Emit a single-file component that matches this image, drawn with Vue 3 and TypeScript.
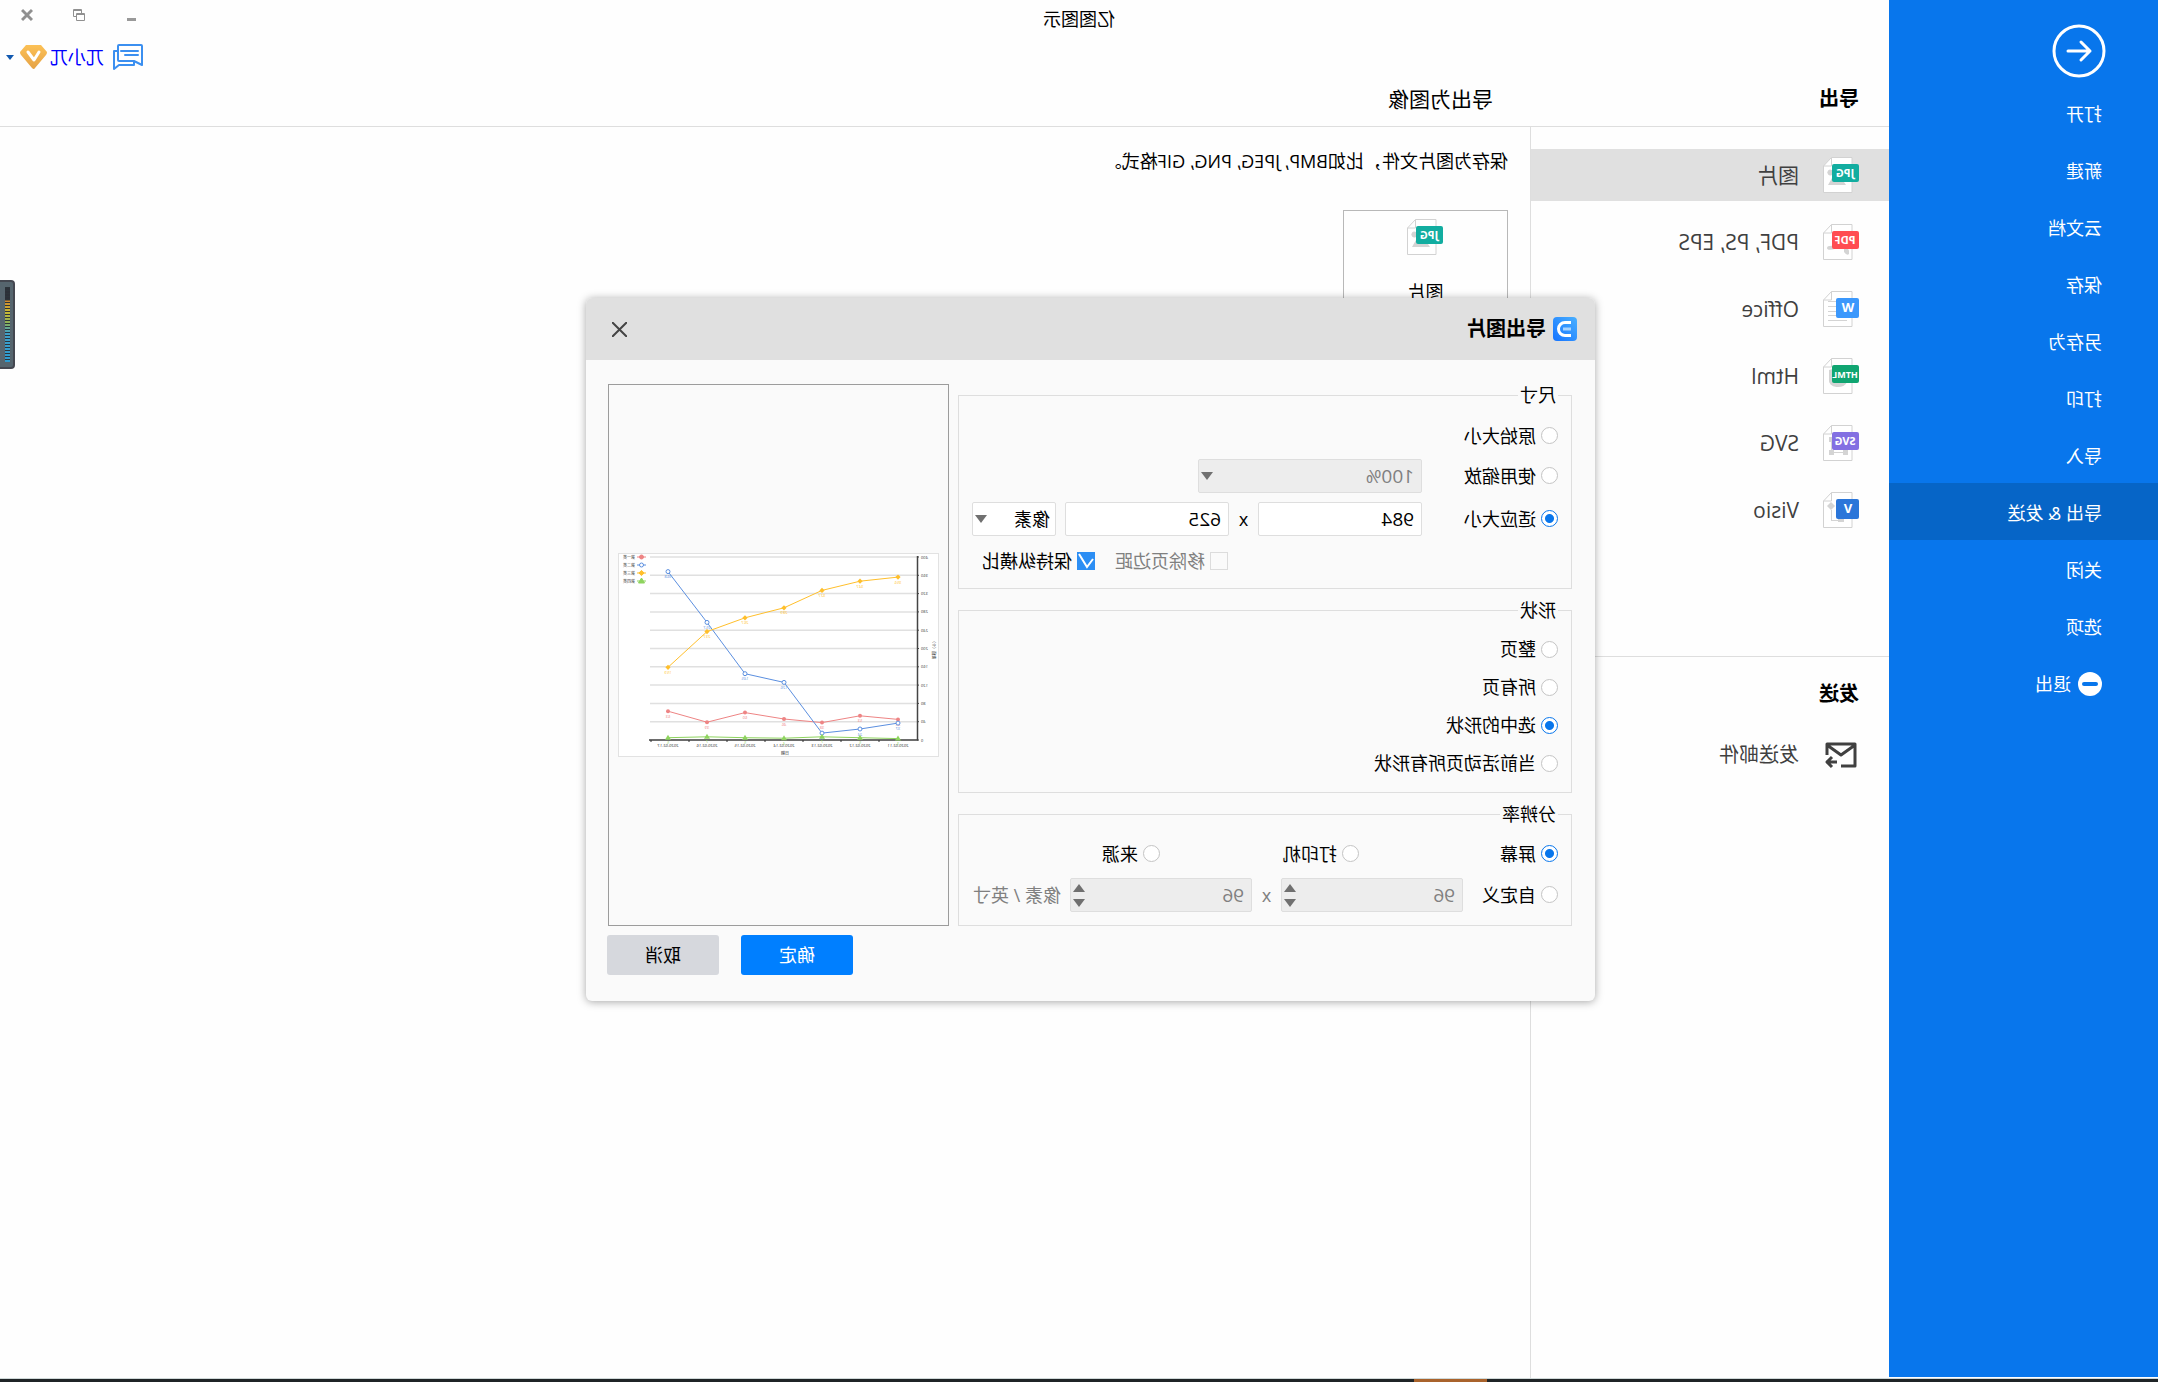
<script setup lang="ts">
import { ref } from 'vue'

interface FileKind {
  label: string
  tag: string
  color: string
  square?: boolean
  art: string
}

const menu = ['打开', '新建', '云文档', '保存', '另存为', '打印', '导入', '导出 & 发送', '关闭', '选项']
const activeMenu = ref(7)

const kinds: FileKind[] = [
  { label: '图片', tag: 'JPG', color: '#12ada0', art: 'M13 28l6-9 5 5 3-3 4 7zM27 13a3 3 0 1 1 0 5z' },
  { label: 'PDF, PS, EPS', tag: 'PDF', color: '#ff4d52', art: 'M10 27q0-3 5-3v4q-3 4-5 2zM24 22q8-1 8 2t-8 1z' },
  { label: 'Office', tag: 'W', color: '#3b98fc', square: true, art: 'M23 10h8v1h-8zM23 15h8v1h-8zM23 20h8v1h-8zM23 24h8v1h-8zM12 29h19v1H12z' },
  { label: 'Html', tag: 'HTML', color: '#10a571', art: 'M12 24a9 6 0 0 0 18-2V12l-4-1v12z' },
  { label: 'SVG', tag: 'SVG', color: '#8370e2', art: 'M11 25h5v5h-5zM25 25h5v5h-5zM16 27h9v1h-9zM25 12h5v5h-5zM27 17h1v8h-1z' },
  { label: 'Visio', tag: 'V', color: '#2b76d9', square: true, art: 'M28 10l4 4-4 4-4-4zM27 18h1v11h-8v-1h7zM15 25h6v5h-6z' },
]
const activeKind = ref(0)

const sizeMode = ref('fit')
const zoom = ref('100%')
const width = ref('984')
const height = ref('625')
const unit = ref('像素')
const trimMargin = ref(false)
const keepRatio = ref(true)

const shapeOptions = ['整页', '所有页', '选中的形状', '当前活动页所有形状']
const shape = ref('选中的形状')

const resolution = ref('屏幕')
const dpiX = ref(96)
const dpiY = ref(96)

/* Preview chart geometry */
const originY = 187
const unitPx = 183 / 400
const pointX = [41, 79, 117, 155, 194, 232, 271]
const toY = (v: number) => Math.round((originY - v * unitPx) * 10) / 10
const ticks = [0, 40, 80, 120, 160, 200, 240, 280, 320, 360, 400]
const dates = ['2020-02-11', '2020-02-12', '2020-02-13', '2020-02-14', '2020-02-15', '2020-02-16', '2020-02-17']
const series = [
  { name: '第一类', color: '#ee8484', marker: 'dot', values: [45, 53, 38, 46, 60, 39, 63] },
  { name: '第二类', color: '#5b8fe0', marker: 'ring', values: [37, 24, 15, 126, 145, 257, 368] },
  { name: '第三类', color: '#ffbf2b', marker: 'diamond', values: [356, 347, 327, 289, 267, 237, 159] },
  { name: '第四类', color: '#8ed45e', marker: 'triangle', values: [3, 5, 7, 4, 5, 7, 5] },
]
const linePoints = (values: number[]) => values.map((v, i) => `${pointX[i]},${toY(v)}`).join(' ')
const markerPath = (kind: string, x: number, y: number) => {
  if (kind === 'diamond') return `M${x} ${y - 2.6}L${x + 2.6} ${y}L${x} ${y + 2.6}L${x - 2.6} ${y}Z`
  if (kind === 'triangle') return `M${x} ${y - 3}L${x + 3} ${y + 2}L${x - 3} ${y + 2}Z`
  return `M${x - 2} ${y}a2 2 0 1 0 4 0a2 2 0 1 0 -4 0Z`
}
</script>

<template>
  <div class="app">
    <div class="workspace">
      <nav class="sidebar">
        <button class="back" aria-label="返回">
          <svg width="54" height="54" viewBox="0 0 54 54" fill="none" stroke="#fff" stroke-width="3" stroke-linecap="round" stroke-linejoin="round">
            <circle cx="27" cy="27" r="25" />
            <path d="M38 27H16M25 18l-9 9 9 9" />
          </svg>
        </button>
        <button v-for="(item, i) in menu" :key="item" class="menu-item" :class="{ active: i === activeMenu }" @click="activeMenu = i">{{ item }}</button>
        <button class="menu-item exit">
          <svg width="24" height="24" viewBox="0 0 24 24"><circle cx="12" cy="12" r="12" fill="#fff" /><rect x="4" y="10" width="16" height="4" rx="2" fill="#0876ec" /></svg>
          退出
        </button>
      </nav>

      <main class="main">
        <header class="header">
          <div class="titlebar">
            <span class="app-title">亿图图示</span>
            <div class="window-buttons">
              <button aria-label="最小化"><svg width="12" height="14" viewBox="0 0 12 14"><path d="M1 10h9v3H1z" fill="#999" /></svg></button>
              <button aria-label="还原"><svg width="12" height="14" viewBox="0 0 12 14" fill="none" stroke="#909090"><path d="M3.5 5V1.5h8v7H9" /><path d="M3 2.5h9" /><path d="M.5 5.5h8v7h-8zM.5 6.500h8" /></svg></button>
              <button aria-label="关闭"><svg width="12" height="14" viewBox="0 0 12 14" fill="none" stroke="#909090" stroke-width="3"><path d="M1 2l10 10M11 2L1 12" /></svg></button>
            </div>
          </div>
          <div class="account">
            <svg width="30" height="26" viewBox="0 0 30 26" fill="none" stroke="#3b8ff0" stroke-width="2" stroke-linejoin="round" stroke-linecap="round">
              <path d="M1 2a1 1 0 0 1 1-1h22a1 1 0 0 1 1 1v14a1 1 0 0 1-1 1H9l-2 1-6 3zM5 7h17M5 11h13" />
              <path d="M26 7h3v18l-5-4H9v-3" />
            </svg>
            <a href="#" class="user">兀小兀</a>
            <svg width="27" height="24" viewBox="0 0 27 24"><defs><linearGradient id="gem" x1="0" y1="0" x2="0" y2="1"><stop offset="0" stop-color="#fcc156" /><stop offset="1" stop-color="#e5a246" /></linearGradient></defs><path d="M6 0h15l6 7q0 2-1 3L15 23q-2 2-3 0L1 10Q0 9 0 7z" fill="url(#gem)" /><path d="M8 7l5 8 6-8" fill="none" stroke="#fff" stroke-width="3" stroke-linecap="round" stroke-linejoin="round" /></svg>
            <svg width="8" height="5" viewBox="0 0 8 5"><path d="M0 0h8L4 5z" fill="#1259b0" /></svg>
          </div>
          <div class="headings">
            <h2 class="panel-title">导出</h2>
            <h1 class="content-title">导出为图像</h1>
          </div>
        </header>

        <div class="columns">
          <aside class="panel">
            <div class="kinds">
              <button v-for="(k, i) in kinds" :key="k.label" class="kind" :class="{ active: i === activeKind }" @click="activeKind = i">
                <svg width="36" height="36" viewBox="0 0 36 36">
                  <path d="M7 .5h20.500L35.500 9v26.500H7z" fill="#fff" stroke="#d2d2d2" />
                  <path d="M27.500 .5V9h8" fill="none" stroke="#d2d2d2" />
                  <path :d="k.art" fill="#d4d4d4" />
                  <rect y="7" :width="k.square ? 23 : 27" :height="k.square ? 20 : 18" rx="2" :fill="k.color" />
                  <text :x="k.square ? 11 : 14" :y="k.square ? 21 : 20" text-anchor="middle" class="tag" :class="{ big: k.square, small: k.tag === 'HTML' }">{{ k.tag }}</text>
                </svg>
                <span>{{ k.label }}</span>
              </button>
            </div>
            <div class="send">
              <h2>发送</h2>
              <button class="kind">
                <svg width="36" height="36" viewBox="0 0 36 36" fill="none" stroke="#404040" stroke-width="3" stroke-linejoin="round">
                  <path d="M18 29H4V7h28v11M4 8l14 10L32 8" />
                  <path d="M33 25H22M27 20l5 5-5 5" />
                </svg>
                <span>发送邮件</span>
              </button>
            </div>
          </aside>
          <section class="content">
            <p>保存为图片文件，比如BMP, JPEG, PNG, GIF格式。</p>
            <button class="card">
              <svg width="36" height="36" viewBox="0 0 36 36">
                <path d="M7 .5h20.500L35.500 9v26.500H7z" fill="#fff" stroke="#d2d2d2" />
                <path d="M27.500 .5V9h8" fill="none" stroke="#d2d2d2" />
                <path :d="kinds[0].art" fill="#d4d4d4" />
                <rect y="7" width="27" height="18" rx="2" fill="#12ada0" />
                <text x="14" y="20" text-anchor="middle" class="tag">JPG</text>
              </svg>
              <span>图片</span>
            </button>
          </section>
        </div>
      </main>
    </div>
    <footer class="taskbar"><i></i></footer>

    <div class="meter"><i></i></div>

    <div class="dialog" role="dialog" aria-labelledby="dialog-title">
      <div class="dialog-head">
        <svg width="24" height="24" viewBox="0 0 24 24" fill="none" stroke="#fff" stroke-width="3"><defs><linearGradient id="logo" x1="0" y1="0" x2="1" y2="1"><stop offset="0" stop-color="#4ab0ff" /><stop offset="1" stop-color="#1473ff" /></linearGradient></defs><rect width="24" height="24" rx="4" fill="url(#logo)" stroke="none" /><path d="M6 5.500h6a6.500 6.500 0 0 1 0 13H6" /><path d="M6 12h8" stroke="#a8d4ff" /></svg>
        <strong id="dialog-title">导出图片</strong>
        <button class="dialog-close" aria-label="关闭"><svg width="15" height="15" viewBox="0 0 15 15" stroke="#444" stroke-width="2"><path d="M0 0l15 15M15 0L0 15" /></svg></button>
      </div>
      <div class="dialog-body">
        <div class="options">
          <fieldset class="size-set">
            <legend>尺寸</legend>
            <div class="row">
              <label class="choice"><input v-model="sizeMode" type="radio" name="size" value="original" />原始大小</label>
            </div>
            <div class="row">
              <label class="choice lead"><input v-model="sizeMode" type="radio" name="size" value="zoom" />使用缩放</label>
              <span class="select zoom"><select v-model="zoom" disabled aria-label="缩放"><option>100%</option></select></span>
            </div>
            <div class="row">
              <label class="choice lead"><input v-model="sizeMode" type="radio" name="size" value="fit" />适应大小</label>
              <input v-model="width" class="box" type="text" aria-label="宽度" />
              <span class="times">x</span>
              <input v-model="height" class="box" type="text" aria-label="高度" />
              <span class="select unit"><select v-model="unit" aria-label="单位"><option>像素</option></select></span>
            </div>
            <div class="row checks">
              <label class="choice off"><input v-model="trimMargin" type="checkbox" disabled />移除页边距</label>
              <label class="choice"><input v-model="keepRatio" type="checkbox" />保持纵横比</label>
            </div>
          </fieldset>
          <fieldset class="shape-set">
            <legend>形状</legend>
            <div v-for="s in shapeOptions" :key="s" class="row">
              <label class="choice"><input v-model="shape" type="radio" name="shape" :value="s" />{{ s }}</label>
            </div>
          </fieldset>
          <fieldset class="res-set">
            <legend>分辨率</legend>
            <div class="row thirds">
              <label v-for="r in ['屏幕', '打印机', '来源']" :key="r" class="choice"><input v-model="resolution" type="radio" name="resolution" :value="r" />{{ r }}</label>
            </div>
            <div class="row off">
              <label class="choice custom"><input v-model="resolution" type="radio" name="resolution" value="自定义" />自定义</label>
              <span class="spin"><input v-model="dpiX" class="box" type="number" disabled aria-label="水平分辨率" /></span>
              <span class="times">x</span>
              <span class="spin"><input v-model="dpiY" class="box" type="number" disabled aria-label="垂直分辨率" /></span>
              <span class="per">像素 / 英寸</span>
            </div>
          </fieldset>
        </div>
        <div class="preview">
          <svg class="chart" viewBox="0 0 321 204">
            <rect x=".5" y=".5" width="320" height="203" fill="#fff" stroke="#e2e2e2" />
            <g v-for="t in ticks" :key="t">
              <line x1="21" :x2="289" :y1="toY(t)" :y2="toY(t)" stroke="#e0e0e0" stroke-width="1.500" />
              <line x1="20" x2="22" :y1="toY(t)" :y2="toY(t)" stroke="#444" />
              <text x="18" :y="toY(t) + 1.500" text-anchor="end" fill="#333">{{ t }}</text>
            </g>
            <path d="M21.500 3V187H290" fill="none" stroke="#444" stroke-width="1.500" />
            <g v-for="(d, i) in dates" :key="d">
              <line :x1="60 + i * 38" :x2="60 + i * 38" y1="187" y2="189" stroke="#333" />
              <text :x="pointX[i]" y="194" text-anchor="middle" fill="#222">{{ d }}</text>
            </g>
            <text x="154" y="202" text-anchor="middle" fill="#222">日期</text>
            <text transform="translate(7 96) rotate(-90)" text-anchor="middle" fill="#222">数值（个）</text>
            <g v-for="(s, n) in series" :key="s.name">
              <polyline :points="linePoints(s.values)" fill="none" :stroke="s.color" stroke-width="1" />
              <g v-for="(v, i) in s.values" :key="i">
                <path :d="markerPath(s.marker, pointX[i], toY(v))" :fill="s.marker === 'ring' ? '#fff' : s.color" :stroke="s.marker === 'ring' ? s.color : 'none'" />
                <text :x="pointX[i]" :y="toY(v) + 6.500" text-anchor="middle" :fill="s.color">{{ v }}</text>
              </g>
              <line x1="293" x2="302" :y1="4 + n * 8" :y2="4 + n * 8" :stroke="s.color" />
              <path :d="markerPath(s.marker, 297.5, 4 + n * 8)" :fill="s.marker === 'ring' ? '#fff' : s.color" :stroke="s.color" />
              <text x="304" :y="5.500 + n * 8" fill="#444">{{ s.name }}</text>
            </g>
          </svg>
        </div>
      </div>
      <div class="dialog-foot">
        <button class="ok">确定</button>
        <button class="cancel">取消</button>
      </div>
    </div>
  </div>
</template>

<style>
body {
  background: #fefefe;
  overflow-x: hidden;
}
</style>

<style scoped>
.app {
  position: relative;
  display: flex;
  flex-direction: column;
  min-height: 100vh;
  background: #fefefe;
  color: #000;
  font-family: "Open Sans", "Noto Sans CJK SC", sans-serif;
  font-size: 18px;
  line-height: 24px;
  /* the whole window is shown flipped, left to right */
  transform: scaleX(-1);
}
button,
input,
select {
  font: inherit;
  color: inherit;
  margin: 0;
  box-sizing: border-box;
}
button {
  border: 0;
  padding: 0;
  background: none;
  cursor: pointer;
}
h1,
h2,
p {
  margin: 0;
}
svg {
  display: block;
  flex: none;
}
.workspace {
  flex: 1;
  display: flex;
}
.sidebar {
  flex: none;
  width: 269px;
  display: flex;
  flex-direction: column;
  background: #0876ec;
  color: #fff;
  margin-bottom: 1px;
}
.back {
  margin: 24px 0 6px 52px;
  align-self: flex-start;
}
.menu-item {
  display: flex;
  align-items: center;
  gap: 7px;
  height: 57px;
  padding: 2px 0 0 56px;
}
.menu-item.active {
  background: #0665c7;
}
.main {
  flex: 1;
  min-width: 0;
  display: flex;
  flex-direction: column;
}
.header {
  border-bottom: 1px solid #dedede;
}
.titlebar {
  display: grid;
  grid-template-columns: 1fr auto 1fr;
  align-items: center;
  height: 38px;
  margin-left: -269px;
}
.app-title {
  grid-column: 2;
}
.window-buttons {
  display: flex;
  justify-content: flex-end;
  align-items: center;
  gap: 40px;
  padding: 0 21px 8px 0;
}
.account {
  display: flex;
  justify-content: flex-end;
  align-items: center;
  height: 38px;
  padding-right: 6px;
}
.user {
  margin: 0 3px 0 9px;
  color: #00f;
  text-decoration: none;
}
.account svg:last-child {
  margin-left: 6px;
}
.headings {
  display: flex;
  align-items: center;
  height: 46px;
  padding-bottom: 4px;
  line-height: 28px;
}
.panel-title {
  width: 365px;
  padding-left: 30px;
  box-sizing: border-box;
  font-size: 20px;
}
.content-title {
  padding-left: 31px;
  font-size: 21px;
  font-weight: 400;
}
.columns {
  flex: 1;
  display: flex;
}
.panel {
  flex: none;
  width: 358px;
  border-right: 1px solid #dedede;
}
.kinds {
  display: flex;
  flex-direction: column;
  gap: 15px;
  height: 507px;
  padding-top: 22px;
}
.kind {
  display: flex;
  align-items: center;
  gap: 24px;
  width: 100%;
  height: 52px;
  padding-left: 30px;
  color: #404040;
  font-size: 20px;
}
.kinds .kind {
  font-size: 21px;
}
.kind.active {
  background: #e0e0e0;
}
.tag {
  font: 700 11px "Open Sans", sans-serif;
  fill: #fff;
}
.tag.big {
  font-size: 13px;
}
.tag.small {
  font-size: 9px;
}
.send {
  border-top: 1px solid #dedede;
  padding-top: 23px;
}
.send h2 {
  padding-left: 30px;
  font-size: 20px;
  line-height: 28px;
}
.send .kind {
  margin-top: 21px;
}
.content {
  flex: 1;
  padding: 22px;
}
.card {
  display: flex;
  flex-direction: column;
  align-items: center;
  gap: 25px;
  width: 165px;
  height: 126px;
  margin-top: 37px;
  padding-top: 8px;
  border: 1px solid #b8b8b8;
}
.taskbar {
  height: 3px;
  border-top: 1px solid #cfd8d8;
  background: #1f2426;
}
.taskbar i {
  display: block;
  width: 73px;
  height: 3px;
  margin-left: 671px;
  background: #a9632c;
}
.meter {
  position: absolute;
  right: 0;
  top: 280px;
  width: 15px;
  height: 89px;
  box-sizing: border-box;
  border: 2px solid #444750;
  border-right: 0;
  border-radius: 4px 0 0 4px;
  background: #56656e;
  padding: 5px 0 5px 3px;
}
.meter i {
  display: block;
  width: 5px;
  height: 100%;
  background:
    repeating-linear-gradient(#2c343a 0 1px, transparent 1px 3px),
    linear-gradient(#2c3038 0 13px, #d08a30 14px, #c8b834 25px, #8ab058 36px, #3fa0c8 46px, #2c9ad0);
}
.dialog {
  position: absolute;
  left: 563px;
  top: 298px;
  width: 1009px;
  border-radius: 6px;
  background: #fafafa;
  box-shadow: 0 1px 8px rgba(0, 0, 0, 0.35);
  overflow: hidden;
}
.dialog-head {
  display: flex;
  align-items: center;
  gap: 7px;
  height: 62px;
  padding: 0 26px 0 18px;
  background: #e0e0e0;
  font-size: 20px;
}
.dialog-close {
  margin-left: auto;
}
.dialog-body {
  display: flex;
  gap: 9px;
  padding: 23px 23px 0;
}
.options {
  flex: 1;
}
fieldset {
  margin: 0;
  min-width: 0;
  box-sizing: border-box;
  border: 1px solid #dedede;
  padding: 0 13px;
}
legend {
  padding: 0 2px;
}
fieldset + fieldset {
  margin-top: 9px;
}
.size-set {
  height: 206px;
}
.shape-set {
  height: 195px;
}
.res-set {
  height: 124px;
}
.row {
  display: flex;
  align-items: center;
  height: 43px;
}
.size-set .row:first-of-type {
  height: 37px;
  padding-top: 10px;
}
.shape-set .row {
  height: 38px;
}
.shape-set .row:first-of-type {
  padding-top: 8px;
}
.size-set .checks {
  height: 42px;
  padding-left: 330px;
  gap: 20px;
}
.thirds {
  display: grid;
  grid-template-columns: 199px 199px auto;
  height: 39px;
  padding-top: 8px;
}
.choice {
  display: flex;
  align-items: center;
  gap: 5px;
  white-space: nowrap;
}
.lead {
  width: 136px;
}
.custom {
  width: 95px;
  color: #000;
}
.off {
  color: #808080;
}
input[type="radio"] {
  appearance: none;
  width: 17px;
  height: 17px;
  border: 1px solid #c4c4c4;
  border-radius: 50%;
  background: #fff;
}
input[type="radio"]:checked {
  border-color: #0876ec;
  background: radial-gradient(circle, #0876ec 4px, #fff 5px);
}
input[type="checkbox"] {
  appearance: none;
  width: 18px;
  height: 18px;
  border: 1px solid #dcdcdc;
  background: #fafafa;
}
input[type="checkbox"]:checked {
  border: 0;
  background: #2c8ef4 url("data:image/svg+xml,%3Csvg xmlns='http://www.w3.org/2000/svg' viewBox='0 0 18 18'%3E%3Cpath d='M2 2l8 13 6-8' fill='none' stroke='%23fff' stroke-width='2'/%3E%3C/svg%3E");
  transform: scaleX(-1);
}
.box,
select {
  appearance: none;
  width: 164px;
  height: 34px;
  border: 1px solid #dedede;
  border-radius: 2px;
  background: #fff;
  padding: 0 7px;
  font-size: 19px;
}
.times {
  width: 29px;
  text-align: center;
}
.box:disabled,
select:disabled {
  background: #ededed;
  color: #808080;
  opacity: 1;
}
.select,
.spin {
  position: relative;
}
.select select {
  display: block;
  width: 100%;
}
.select.zoom {
  width: 224px;
}
.unit {
  width: 84px;
  margin-left: 9px;
}
.unit select {
  padding: 0 5px;
  font-size: 18px;
}
.select::after,
.spin::before,
.spin::after {
  content: "";
  position: absolute;
  right: 3px;
  border: 0 solid transparent;
  border-width: 0 6px;
  pointer-events: none;
}
.select::after {
  top: 13px;
  border-top: 8px solid #707070;
}
.spin::before {
  top: 6px;
  border-bottom: 8px solid #707070;
}
.spin::after {
  bottom: 5px;
  border-top: 8px solid #707070;
}
.spin .box {
  display: block;
  width: 182px;
  appearance: textfield;
}
.spin .box::-webkit-inner-spin-button {
  display: none;
}
.per {
  margin-left: 9px;
}
.preview {
  flex: none;
  width: 341px;
  margin-top: 1px;
  box-sizing: border-box;
  border: 1px solid #9c9c9c;
  display: flex;
  align-items: center;
  justify-content: center;
}
.chart {
  width: 321px;
  height: 204px;
  font-size: 4px;
}
.dialog-foot {
  display: flex;
  justify-content: flex-end;
  gap: 22px;
  padding: 9px 21px 26px;
}
.dialog-foot button {
  width: 112px;
  height: 40px;
  border-radius: 3px;
}
.ok {
  background: #007fff;
  color: #fff;
}
.cancel {
  background: #d6d8dd;
}
</style>
